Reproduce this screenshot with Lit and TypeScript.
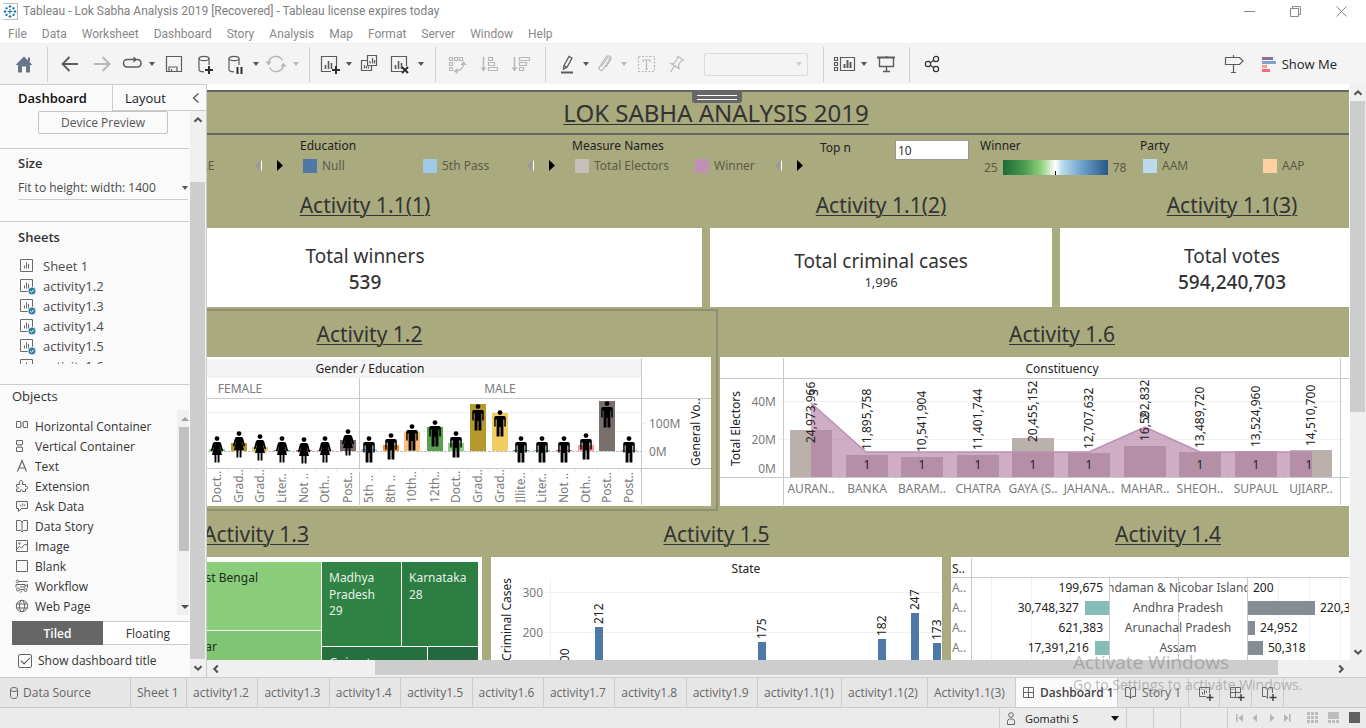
import { LitElement, html, svg, css } from "lit";
import { customElement } from "lit/decorators.js";

const resets = css`
  * { box-sizing: border-box; }
  button, input, select {
    font: inherit;
    color: inherit;
    background: none;
    border: 0;
    border-radius: 0;
    padding: 0;
    margin: 0;
  }
  svg { display: block; flex: none; }
  ul { list-style: none; margin: 0; padding: 0; }
  h1, h2, h3, p { margin: 0; font-weight: 400; }
`;

/* ---------- toolbar icons, all on a 24px box ---------- */
const D = "#5c5c5c";
const L = "#b8b8b8";
const icon = (body: unknown, color = D) => html`<svg width="24" height="24" viewBox="0 0 24 24" fill="none" stroke=${color} stroke-width="1.2" aria-hidden="true">${body}</svg>`;
const plus = (x: number, y: number) => svg`<path d="M${x - 4} ${y}h8M${x} ${y - 4}v8" stroke="#2e2e2e" stroke-width="2"/>`;
const cylinder = svg`<ellipse cx="10" cy="6.5" rx="5" ry="2.2"/><path d="M5 6.5v11c0 1.4 2 2.3 5 2.3M15 6.5V13"/>`;
const bars3 = svg`<path d="M8.5 17v-4M11.5 17V9M14.5 17v-6" stroke-width="1.6"/>`;

const icons = {
  home: icon(svg`<path d="M12 4.5 20.5 13H18v7.5h-4v-6h-4v6H6V13H3.5z" fill="#66758a" stroke="none"/><path d="M16 5.5h2v4h-2z" fill="#66758a" stroke="none"/>`),
  back: icon(svg`<path d="M4.5 12H20M11.5 5 4.5 12l7 7" stroke-width="1.9"/>`),
  forward: icon(svg`<path d="M19.500 12H4M12.500 5l7 7-7 7" stroke-width="1.9"/>`, L),
  replay: icon(svg`<path d="M15 7.500H7a3.500 3.500 0 0 0-3.500 3.500v.5A3.500 3.500 0 0 0 7 15h10.500a3.500 3.500 0 0 0 3.500-3.500c0-2.500-1.500-4-4-4" stroke-width="1.5"/><path d="M13.500 4.500 17.500 7.500l-4 3z" fill="#5c5c5c" stroke="none"/>`),
  save: icon(svg`<path d="M4.500 4.500h15v15h-15z"/><path d="M7 19.500v-4.500h8v4.500M9.500 17v2.500" />`),
  addData: icon(svg`${cylinder}${plus(15, 18)}`),
  pause: icon(svg`${cylinder}<path d="M13.500 15v7M17.500 15v7" stroke="#2e2e2e" stroke-width="2"/>`),
  refresh: icon(svg`<path d="M4.500 10.500a7.500 7.500 0 0 1 14-2M19.500 13.500a7.500 7.500 0 0 1-14 2" stroke-width="1.5"/><path d="M1.500 9.500h6l-3 4zM16.500 14.500h6l-3-4z" fill="#b8b8b8" stroke="none"/>`, L),
  newSheet: icon(svg`<path d="M14 19.500H4.500v-15h15V14"/>${bars3}${plus(19, 18)}`),
  duplicate: icon(svg`<path d="M10.500 3.500h9v10h-9zM10 8.500H4.500v10h10V14"/><path d="M13 11.500V9M15.500 11.500V6M17.500 11.500V8M7.500 16.500V13M9.500 16.500V14M11.500 16.500V14.500"/>`),
  clear: icon(svg`<path d="M15 19.500H4.500v-15h15V14"/>${bars3}<path d="m15 15 6 6M21 15l-6 6" stroke="#2e2e2e" stroke-width="2"/>`),
  swap: icon(svg`<path d="M4.500 5.500h3v3h-3zM9.500 5.500h3v3h-3zM14.500 5.500h3v3h-3zM4.500 10.500h3v3h-3zM4.500 15.500h3v3h-3z"/><path d="M10 19c5 0 8-3 8.500-7" stroke-width="1.400"/><path d="M12.500 16v6L8.500 19zM15.500 13h6l-3-4z" fill="#b8b8b8" stroke="none"/>`, L),
  sortAsc: icon(svg`<path d="M6.500 5v12" stroke-width="1.500"/><path d="M3.500 15.500h6l-3 4z" fill="#b8b8b8" stroke="none"/><path d="M11.500 5.500h4v3h-4zM11.500 10.500h6v3h-6zM11.500 15.500h9v3h-9z"/>`, L),
  sortDesc: icon(svg`<path d="M5.500 5v12" stroke-width="1.500"/><path d="M2.500 15.500h6l-3 4z" fill="#b8b8b8" stroke="none"/><path d="M10.500 5.500h10v3h-10zM10.500 10.500h7v3h-7zM10.500 15.500h4v3h-4z"/>`, L),
  highlight: icon(svg`<path d="M9 13.500 14 4.500l3 1.700L12 15.200l-3.500 1.800zM9 13.500l3 1.700" stroke-width="1.300"/><path d="M6 20.500h12" stroke-width="2"/>`),
  clip: icon(svg`<path d="M8.500 14.500 14 6.500c1-1.500 3.500 0 2.500 1.700L10 17.500c-1.700 2.300-5 0-3.500-2.500L13 5c2-3 6.500 0 4.500 3l-4.500 7" />`, L),
  text: icon(svg`<path d="M4.500 4.500h16v15h-16z" stroke-dasharray="2 1.500"/><path d="M9 10V8h7v2M12.500 8v9M11 17h3"/>`, L),
  pin: icon(svg`<path d="m13 4.500 5.500 3.500-1.500 1-1 0-2.500 4 .5 3.500-8-5 3.500-.5 2.500-4zM9.500 14l-4 6"/>`, L),
  cards: icon(svg`<path d="M1.500 5.500h3v3h-3zM1.500 10.500h3v3h-3zM1.500 15.500h3v3h-3zM7.500 5.500h14v13h-14z"/><path d="M11.500 16v-4M14.500 16V8M17.500 16v-6" stroke-width="2"/>`),
  present: icon(svg`<path d="M3 5.500h18" stroke-width="2"/><path d="M5.500 6v8.500h14V6M12.500 14.500v5M9 19.500h7M12.500 4v1.500" stroke-width="1.400"/>`),
  share: icon(svg`<circle cx="8" cy="12" r="2.600"/><circle cx="16" cy="7" r="2.600"/><circle cx="16" cy="17" r="2.600"/><path d="m10.300 10.700 3.500-2.200m-3.500 4.800 3.500 2.200"/>`, "#333"),
  sign: icon(svg`<path d="M3.500 5.500h14l3.500 3.500-3.500 3.500h-14zM11.500 3v2.500M11.500 12.500v7.500M9 20.500h5" />`),
};

const caret = (color = "#555") => html`<svg width="6" height="4" viewBox="0 0 6 4" aria-hidden="true"><path d="M0 0h6L3 4z" fill=${color} /></svg>`;
const chevron = (rot: number) => html`<svg width="10" height="10" viewBox="0 0 10 10" aria-hidden="true"><path d="M1.500 6.800 5 3.300l3.500 3.500" fill="none" stroke="#505050" stroke-width="2" transform="rotate(${rot} 5 5)" /></svg>`;

@customElement("tb-toolbar")
class TbToolbar extends LitElement {
  static styles = [resets, css`
    :host { display: flex; align-items: center; background: #f4f4f4; border-top: 1px solid #ececec; height: 41px; flex: none; }
    .group { display: grid; grid-auto-flow: column; align-items: center; justify-items: center; height: 35px; border-right: 1px solid #d0d0d0; }
    .g-home { grid-template-columns: 47px; }
    .g-file { grid-template-columns: 32px 32px 28px 12px 32px 32px 28px 12px 28px 12px; padding: 0 7px 0 6px; }
    .g-sheet { grid-template-columns: 28px 12px 28px 32px 12px; padding: 0 8px 0 5px; }
    .g-sort { grid-template-columns: 32px 32px 32px; padding: 0 8px 0 5px; }
    .g-mark { grid-template-columns: 26px 12px 26px 12px 32px 30px 116px; padding: 0 15px 0 8px; }
    .g-view { grid-template-columns: 26px 12px 32px; padding: 0 7px 0 8px; }
    .g-share { grid-template-columns: 32px; padding-left: 6px; border: 0; }
    button { display: grid; place-items: center; height: 28px; }
    .fit { appearance: none; width: 104px; height: 23px; border: 1px solid #d0d0d0; border-radius: 2px; justify-self: end; }
    .fitbox { display: grid; justify-self: end; align-items: center; }
    .fitbox > * { grid-area: 1 / 1; }
    .fitbox svg { justify-self: end; margin-right: 6px; pointer-events: none; }
    .right { margin-left: auto; display: flex; align-items: center; gap: 16px; padding-right: 29px; }
    .show { display: flex; gap: 6px; align-items: center; font-size: 13px; color: #222; }
  `];
  render() {
    const b = (name: string, i: unknown) => html`<button aria-label=${name}>${i}</button>`;
    return html`
      <div class="group g-home">${b("Start page", icons.home)}</div>
      <div class="group g-file">
        ${b("Undo", icons.back)}${b("Redo", icons.forward)}${b("Replay", icons.replay)}${b("Replay options", caret())}
        ${b("Save", icons.save)}${b("New data source", icons.addData)}${b("Pause updates", icons.pause)}${b("Pause options", caret())}
        ${b("Run update", icons.refresh)}${b("Update options", caret(L))}
      </div>
      <div class="group g-sheet">
        ${b("New worksheet", icons.newSheet)}${b("New options", caret())}${b("Duplicate", icons.duplicate)}${b("Clear sheet", icons.clear)}${b("Clear options", caret())}
      </div>
      <div class="group g-sort">${b("Swap", icons.swap)}${b("Sort ascending", icons.sortAsc)}${b("Sort descending", icons.sortDesc)}</div>
      <div class="group g-mark">
        ${b("Highlight", icons.highlight)}${b("Highlight options", caret())}${b("Group", icons.clip)}${b("Group options", caret(L))}
        ${b("Show labels", icons.text)}${b("Fix axes", icons.pin)}
        <div class="fitbox"><select class="fit" aria-label="Fit" disabled></select>${caret("#ccc")}</div>
      </div>
      <div class="group g-view">${b("Cards", icons.cards)}${b("Card options", caret())}${b("Presentation mode", icons.present)}</div>
      <div class="group g-share">${b("Share", icons.share)}</div>
      <div class="right">
        ${b("Data guide", icons.sign)}
        <button class="show">
          <svg width="14" height="15" viewBox="0 0 14 15"><path d="M0 0h11v3H0z" fill="#8b6f98"/><path d="M0 4h14v3H0z" fill="#7fa3cf"/><path d="M0 8h5v3H0z" fill="#f2a47e"/><path d="M0 12h8v3H0z" fill="#f26a80"/></svg>
          <span>Show Me</span>
        </button>
      </div>`;
  }
}

/* ---------- side pane ---------- */
const sheetIcon = (used: boolean) => html`<svg width="16" height="18" viewBox="0 0 16 18" fill="none" stroke="#6a6a6a" aria-hidden="true"><path d="M.5 2.500h12v12H.5z"/><path d="M4.500 11.500v-3M6.500 11.500v-6M8.500 11.500V7"/>${used ? svg`<circle cx="12" cy="14" r="4" fill="#327f9e" stroke="#fafafa" stroke-width=".8"/><path d="m10.200 14 1.300 1.300 2.300-2.500" stroke="#fff"/>` : ""}</svg>`;
const small = (body: unknown) => html`<svg width="14" height="14" viewBox="0 0 14 14" fill="none" stroke="#666" aria-hidden="true">${body}</svg>`;
const objects: [string, unknown][] = [
  ["Horizontal Container", small(svg`<path d="M1.500 2.500h4v6h-4zM8.500 2.500h4v6h-4z"/><path d="M5.500 3h3v5h-3z" fill="#b9b9b9" stroke="none"/>`)],
  ["Vertical Container", small(svg`<path d="M1.500 1.500h6v4h-6zM1.500 8.500h6v4h-6z"/><path d="M2 5.500h5v3H2z" fill="#b9b9b9" stroke="none"/>`)],
  ["Text", small(svg`<path d="M2.500 12.500 7 1.500l4.500 11M4 9h6" stroke-width="1.200"/>`)],
  ["Extension", small(svg`<path d="M1.500 5.500h3.300C3.500 3 4.500 1.500 6 1.500s2.500 1.500 1.200 4h3.300v2c3-.8 3 3.300 0 2.500v2.500H7.500c.5-2.300-2.500-2.300-2 0h-4V10c2.500.5 2.500-2.500 0-2z"/>`)],
  ["Ask Data", small(svg`<path d="M1.500 2.500h11v7h-6l-3 3v-3h-2z"/><path d="M5.500 7.500v-2M7.500 7.500v-3M9.500 7.500V5" stroke="#aaa" stroke-width="1.500"/>`)],
  ["Data Story", small(svg`<path d="M7 3 5.500 1.500h-4v10h4L7 13l1.500-1.500h4v-10h-4zv10"/>`)],
  ["Image", small(svg`<path d="M1.500 1.500h11v11h-11z"/><path d="m1.500 10 3-2.500 2 1.500 3-3.500 3 .5" /><circle cx="4.500" cy="4.500" r=".8"/>`)],
  ["Blank", small(svg`<path d="M1.500 1.500h11v11h-11z"/>`)],
  ["Workflow", small(svg`<circle cx="2.500" cy="2.500" r="1.300"/><path d="M4 2.500h8.500M1 5.500h9v2.500H5M1 5.500v3M10 7l2.500-1.500V9"/><circle cx="3" cy="10.500" r="1.500"/><circle cx="10.500" cy="11" r="1.500"/><path d="M4.500 10.500H9M5 13.500 7 12"/>`)],
  ["Web Page", small(svg`<circle cx="7" cy="7" r="5.700"/><ellipse cx="7" cy="7" rx="2.600" ry="5.700"/><path d="M1.500 5h11M1.500 9h11"/>`)],
];

@customElement("tb-side-pane")
class TbSidePane extends LitElement {
  static styles = [resets, css`
    :host { display: flex; flex-direction: column; width: 207px; flex: none; background: #fafafa; color: #4a4a4a; border-top: 1px solid #ccc; border-right: 1px solid #ccc; font-size: 12px; min-height: 0; }
    .tabs { display: grid; grid-template-columns: 112px 1fr; height: 26px; flex: none; }
    .tab { font-size: 13px; color: #222; text-align: left; }
    .on { font-weight: 600; padding-left: 18px; color: #111; }
    .off { border-left: 1px solid #ccc; border-bottom: 1px solid #ccc; padding: 0 6px 0 12px; display: flex; align-items: center; justify-content: space-between; }
    .body { display: grid; grid-template-columns: 1fr 16px; flex: 1; min-height: 0; overflow: hidden; }
    .bar { background: #f0f0f0; display: flex; flex-direction: column; }
    .bar button { height: 18px; display: grid; place-items: center; flex: none; }
    .thumb { background: #cdcdcd; margin-top: 53px; margin-right: 1px; flex: 1; }
    .content { display: flex; flex-direction: column; padding-right: 1px; }
    .preview { height: 23px; width: 130px; border: 1px solid #c4c4c4; border-radius: 2px; margin: 0 auto 14px 38px; color: #555; flex: none; }
    h2 { font-size: 13px; line-height: 16px; font-weight: 600; color: #333; }
    .size, .sheets { border-top: 1px solid #ccc; padding-left: 18px; flex: none; }
    .size { height: 73px; padding-top: 6px; }
    .field { display: grid; align-items: start; border-bottom: 1px solid #ccc; margin: 7px 1px 0 0; height: 22px; }
    .field > * { grid-area: 1 / 1; }
    .field select { appearance: none; width: 100%; height: 20px; line-height: 20px; }
    .field svg { justify-self: end; margin: 8px 0 0 0; pointer-events: none; }
    .sheets { height: 163px; padding-top: 7px; }
    .sheets ul { height: 108px; overflow: hidden; margin-top: 11px; }
    li { height: 20px; display: flex; align-items: center; }
    .sheets li { gap: 7px; padding-left: 2px; font-size: 13px; }
    .objects { border-top: 1px solid #ccc; padding: 3px 0 0 12px; flex: none; color: #333; }
    .objects h2 { font-weight: 400; }
    .shelf { display: grid; grid-template-columns: 1fr 12px; height: 205px; overflow: hidden; margin-top: 6px; }
    .shelf ul { padding-top: 6px; }
    .shelf li { gap: 6px; padding-left: 3px; }
    .mini { background: #f0f0f0; display: flex; flex-direction: column; align-items: end; }
    .mini .m-thumb { background: #c1c1c1; width: 10px; height: 124px; margin-top: 6px; }
    .mini svg { margin: 7px 0 0 0; }
    .mini .down { margin: auto 0 7px 0; }
    .mode { display: grid; grid-template-columns: 91px 1fr; height: 24px; margin-top: 6px; }
    .tiled { background: #666; color: #fff; font-weight: 600; }
    .floating { border: 1px solid #ccc; border-width: 1px 0; background: #fff; padding-left: 4px; }
    .check { display: flex; align-items: center; gap: 6px; padding: 7px 0 0 6px; }
    .check input { appearance: none; width: 14px; height: 14px; border: 1px solid #666; border-radius: 2px; display: grid; place-items: center; background: #fff; }
    .check input:checked::after { content: ""; width: 4px; height: 8px; border: solid #444; border-width: 0 1px 1px 0; transform: translateY(-1px) rotate(45deg); }
  `];
  render() {
    return html`
      <div class="tabs">
        <button class="tab on">Dashboard</button>
        <button class="tab off">Layout
          <svg width="8" height="12" viewBox="0 0 8 12"><path d="M6.500 1.500 1.500 6l5 4.500" fill="none" stroke="#555" stroke-width="1.300" /></svg>
        </button>
      </div>
      <div class="body">
        <div class="content">
          <button class="preview">Device Preview</button>
          <section class="size">
            <h2>Size</h2>
            <div class="field"><select aria-label="Size"><option>Fit to height: width: 1400</option></select>${caret()}</div>
          </section>
          <section class="sheets">
            <h2>Sheets</h2>
            <ul>${["Sheet 1", "activity1.2", "activity1.3", "activity1.4", "activity1.5", "activity1.6"].map((s, i) => html`<li>${sheetIcon(i > 0)}<span>${s}</span></li>`)}</ul>
          </section>
          <section class="objects">
            <h2>Objects</h2>
            <div class="shelf">
              <ul>${objects.map(([n, i]) => html`<li>${i}<span>${n}</span></li>`)}</ul>
              <div class="mini">
                <svg width="8" height="4" viewBox="0 0 8 4"><path d="M0 4h8L4 0z" fill="#a0a0a0"/></svg>
                <div class="m-thumb"></div>
                <svg class="down" width="8" height="4" viewBox="0 0 8 4"><path d="M0 0h8L4 4z" fill="#505050"/></svg>
              </div>
            </div>
            <div class="mode"><button class="tiled">Tiled</button><button class="floating">Floating</button></div>
            <label class="check"><input type="checkbox" checked /><span>Show dashboard title</span></label>
          </section>
        </div>
        <div class="bar"><button aria-label="Scroll up">${chevron(0)}</button><div class="thumb"></div><button aria-label="Scroll down">${chevron(180)}</button></div>
      </div>`;
  }
}

/* ---------- charts ---------- */
const chartStyles = css`
  :host { display: block; }
  svg { font-size: 12px; }
  .ink { fill: #222; }
  .mute { fill: #7b7b7b; }
  .mid { text-anchor: middle; }
  .end { text-anchor: end; }
  .line { stroke: #c9c9c9; fill: none; }
  .grid { stroke: #f0f0f0; fill: none; }
  .dash { stroke: #bdbdbd; fill: none; stroke-dasharray: 3 1; }
  .crisp { shape-rendering: crispEdges; }
`;
const up = (x: number, y: number, t: string, cls = "ink") => svg`<text class=${cls} transform="translate(${x} ${y}) rotate(-90)">${t}</text>`;

const man = svg`<circle cx="0" cy="2.600" r="2.400"/><path d="M-4 6h8q1.800 0 1.800 2v8.500H4.300V9.500H3.400V26.500H.5V17h-1v9.500h-2.900V9.500h-.9v7h-1.500V8q0-2 1.800-2z"/>`;
const woman = svg`<circle cx="0" cy="2.600" r="2.400"/><path d="M-2.500 6h5q1.200 0 1.700 1.500L6.200 15l-1.500.6L2.700 10 5 19H2.500v7.500H.6V19h-1.200v7.500h-1.900V19H-5l2.300-9-2 5.600L-6.200 15l2-7.500Q-3.700 6-2.500 6z"/>`;
type Mark = [number, string, number, string, number];
const marks: Mark[] = [
  [217, "Doct..", 449, "#8cd17d", 436], [239, "Grad..", 443, "#b6992d", 431], [260, "Grad..", 447, "#f1ce63", 434],
  [282, "Liter..", 450, "#499894", 436], [304, "Not ..", 450, "#e15759", 437], [325, "Oth..", 450, "#ff9d9a", 436], [348, "Post..", 440, "#79706e", 429],
  [369, "5th ..", 449, "#a0cbe8", 436], [391, "8th ..", 445, "#f28e2b", 433], [412, "10th..", 432, "#ffbe7d", 424], [435, "12th..", 427, "#59a14f", 420],
  [456, "Doct..", 443, "#8cd17d", 431], [478, "Grad..", 404, "#b6992d", 404], [500, "Grad..", 413, "#f1ce63", 410], [521, "Illite..", 450, "#499894", 436],
  [542, "Liter..", 450, "#86bcb6", 436], [564, "Not ..", 450, "#e15759", 436], [586, "Oth..", 445, "#ff9d9a", 433], [607, "Post..", 401, "#79706e", 401], [629, "Post..", 450, "#bab0ac", 436],
];

@customElement("tb-votes-by-education")
class TbVotesByEducation extends LitElement {
  static styles = [resets, chartStyles];
  render() {
    return html`<svg width="683" height="149" viewBox="28 357 683 149" role="img" aria-label="General votes by gender and education">
      <g class="crisp">
        <path d="M28 359h613v19H28z" fill="#f4f4f4"/>
        <path class="grid" d="M28 412.500h613M28 431.500h613M641 423.500h5M641 451.500h5"/>
        <path class="dash" d="M28 451.500h613"/>
        <path class="line" d="M28 398.500h683M28 468.500h683M359.500 378v127M641.500 358v147"/>
        ${marks.map((m) => svg`<path d="M${m[0] - 8} ${m[2]}h16V451h-16z" fill=${m[3]}/><path class="grid" d="M${m[0] + 11.5} 469v3"/>`)}
      </g>
      ${marks.map((m) => svg`<g transform="translate(${m[0]} ${m[4]})">${m[0] < 359 ? woman : man}</g>${up(m[0] + 4, 503, m[1], "mute")}`)}
      <text class="ink mid" x="370" y="373">Gender / Education</text>
      <text class="mute mid" x="240" y="393">FEMALE</text>
      <text class="mute mid" x="500" y="393">MALE</text>
      <text class="mute" x="649" y="428">100M</text>
      <text class="mute" x="649" y="456">0M</text>
      ${up(700, 466, "General Vo..")}
    </svg>`;
  }
}

const seats: [string, string, number, number, string][] = [
  ["AURAN..", "24,973,966", 430, 443, ""], ["BANKA", "11,895,758", 455, 450, "1"], ["BARAM..", "10,541,904", 457, 452, "1"],
  ["CHATRA", "11,401,744", 455, 450, "1"], ["GAYA (S..", "20,455,152", 438, 442, "1"], ["JAHANA..", "12,707,632", 453, 449, "1"],
  ["MAHAR..", "16,592,832", 446, 441, ""], ["SHEOH..", "13,489,720", 452, 448, "1"], ["SUPAUL", "13,524,960", 451, 447, "1"], ["UJIARP..", "14,510,700", 450, 446, "1"],
];
const seatX = (i: number) => Math.round(811 + i * 55.6);

@customElement("tb-electors")
class TbElectors extends LitElement {
  static styles = [resets, chartStyles];
  render() {
    return html`<svg width="684" height="149" viewBox="720 357 684 149" role="img" aria-label="Total electors by constituency">
      <g class="crisp">
        <path class="grid" d="M779 401.500h566M779 439.500h566"/>
        ${seats.map((s, i) => svg`<path d="M${seatX(i) - 21} ${s[2]}h42V477h-42z" fill="#bab0ac"/><path class="grid" d="M${seatX(i) + 28.5} 478v3"/>`)}
      </g>
      <path d="M811 403 866 452H1089L1145 427 1200 452H1312V477H811z" fill="#b07aa1" fill-opacity=".62"/>
      <path d="M811 403 866 452H1089L1145 427 1200 452H1312" fill="none" stroke="#bd8fb2" stroke-width="1.500"/>
      <path class="line crisp" d="M720 378.500h684M720 477.500h684M783.500 358v147M1340.500 358v147"/>
      <text class="ink mid" x="1062" y="373">Constituency</text>
      ${up(740, 466, "Total Electors")}
      <text class="mute end" x="776" y="406">40M</text>
      <text class="mute end" x="776" y="444">20M</text>
      <text class="mute end" x="776" y="473">0M</text>
      ${seats.map((s, i) => svg`${up(seatX(i) + 4, s[3], s[1])}<text class="ink mid" x=${i === 9 ? 1309 : seatX(i)} y="469">${s[4]}</text><text class="mute mid" x=${seatX(i)} y="493">${s[0]}</text>`)}
      ${up(818, 396, "3")}${up(1149, 419, "2")}
    </svg>`;
  }
}

@customElement("tb-treemap")
class TbTreemap extends LitElement {
  static styles = [resets, chartStyles, css`.lite { fill: #e6efe8; } .dark { fill: #1e2b1c; }`];
  render() {
    return html`<svg width="452" height="110" viewBox="30 557 452 110" role="img" aria-label="Seats by state">
      <g class="crisp">
        <path d="M34 562h287v68H34z" fill="#8ace7b"/><path d="M34 631h287v36H34z" fill="#80c574"/>
        <path d="M322 562h79v84h-79z" fill="#308344"/><path d="M402 562h76v84h-76z" fill="#2c7d41"/>
        <path d="M322 647h105v20H322z" fill="#266f3e"/><path d="M428 647h50v20h-50z" fill="#23693f"/>
      </g>
      <text class="dark end" x="258" y="582">West Bengal</text>
      <text class="dark end" x="217" y="651">Bihar</text>
      <text class="lite" x="329" y="582">Madhya</text><text class="lite" x="329" y="599">Pradesh</text><text class="lite" x="329" y="615">29</text>
      <text class="lite" x="409" y="582">Karnataka</text><text class="lite" x="409" y="599">28</text>
      <text class="lite" x="329" y="667">Gujarat</text>
    </svg>`;
  }
}

const cases: [number, number, string][] = [[599, 627, "212"], [762, 642, "175"], [882, 639, "182"], [915, 613, "247"], [937, 643, "173"]];
@customElement("tb-criminal-cases")
class TbCriminalCases extends LitElement {
  static styles = [resets, chartStyles];
  render() {
    return html`<svg width="451" height="110" viewBox="491 557 451 110" role="img" aria-label="Criminal cases by state">
      <g class="crisp">
        <path class="grid" d="M545 592.500h397M545 632.500h397M550.500 578v89"/>
        ${cases.map((c) => svg`<path d="M${c[0] - 4} ${c[1]}h8V667h-8z" fill="#4e79a7"/>`)}
      </g>
      <text class="ink mid" x="746" y="573">State</text>
      <text class="mute end" x="543" y="597">300</text><text class="mute end" x="543" y="637">200</text>
      ${up(511, 578, "Criminal Cases", "ink end")}
      ${up(569, 669, "100")}
      ${cases.map((c) => up(c[0] + 4, c[1] - 3, c[2]))}
    </svg>`;
  }
}

const states: [string, string, number, string, number][] = [
  ["Andaman & Nicobar Islands", "199,675", 0, "200", 0], ["Andhra Pradesh", "30,748,327", 24, "220,390", 67],
  ["Arunachal Pradesh", "621,383", 0, "24,952", 7], ["Assam", "17,391,216", 14, "50,318", 15],
];
@customElement("tb-state-votes")
class TbStateVotes extends LitElement {
  static styles = [resets, chartStyles];
  render() {
    return html`<svg width="434" height="110" viewBox="951 557 434 110" role="img" aria-label="Votes by state">
      <defs><clipPath id="names"><path d="M1110 578h137v89h-137z"/></clipPath></defs>
      <g class="crisp">
        <path class="grid" d="M991.500 578v89M1031.500 578v89M1070.500 578v89M1278.500 578v89M1309.500 578v89M1340.500 578v89"/>
        ${states.map((s, i) => svg`<path d="M${1109 - s[2]} ${601 + (i - 1) * 20}h${s[2]}v14h-${s[2]}z" fill="#86bcb6"/><path d="M1248 ${601 + (i - 1) * 20}h${s[4]}v14h-${s[4]}z" fill="#858c94"/>`)}
        <path class="line" d="M951 577.500h434M971.500 558v109M1109.500 578v89M1247.500 578v89"/>
        <path class="dash" d="M1178.500 578v89"/>
      </g>
      <text class="ink" x="952" y="573">S..</text>
      ${states.map((s, i) => {
        const y = 592 + i * 20;
        return svg`<text class="mute" x="952" y=${y}>A..</text>
          <text class="ink end" x=${1103 - s[2]} y=${y}>${s[1]}</text>
          <g clip-path="url(#names)"><text class="mid" fill="#555" x="1178" y=${y}>${s[0]}</text></g>
          <text class="ink" x=${1253 + s[4]} y=${y}>${s[3]}</text>`;
      })}
    </svg>`;
  }
}

/* ---------- dashboard canvas ---------- */
@customElement("tb-canvas")
class TbCanvas extends LitElement {
  static styles = [resets, css`
    :host { display: grid; grid-template: minmax(0, 1fr) 17px / minmax(0, 1fr) 17px; flex: 1; min-width: 0; min-height: 0; background: #fff; }
    .view { overflow: hidden; padding-top: 6px; }
    .board { width: 1400px; margin-left: -191px; background: #a9aa7e; color: #333; font-family: "Noto Sans", "Open Sans", sans-serif; font-size: 12px; min-height: 100%; }
    .title { position: relative; border: solid #666; border-width: 2px 0; height: 45px; display: grid; place-items: center; }
    .title h1 { font-size: 24px; line-height: 40px; text-decoration: underline; text-decoration-thickness: 1px; text-underline-offset: 2px; }
    .grip { position: absolute; top: 0; left: 676px; width: 50px; height: 11px; background: #666; border-radius: 0 0 3px 3px; display: grid; align-content: center; gap: 3px; padding: 0 5px; }
    .grip i { height: 1px; background: #fff; }
    .filters { display: grid; grid-template-columns: 272px 272px 248px 160px 160px 272px; padding-left: 12px; height: 48px; }
    .legend h3, .topn span { color: #222; font-size: 12px; line-height: 16px; }
    .legend { padding-top: 3px; }
    .items { display: flex; align-items: center; padding: 0 17px 0 3px; height: 23px; color: #5b5b49; }
    .item { display: flex; align-items: center; gap: 5px; width: 120px; }
    .item.tight { width: auto; }
    .sw { width: 14px; height: 14px; }
    .arrows { display: flex; align-items: center; gap: 15px; margin-left: auto; }
    .arrows button { height: 12px; }
    .topn { display: grid; grid-template-columns: 75px 74px; align-items: start; padding-top: 5px; }
    .topn input { background: #fff; border: 1px solid #999; height: 20px; padding: 0 2px; width: 74px; color: #333; }
    .ramp { display: flex; align-items: center; gap: 5px; height: 26px; padding-left: 4px; color: #5b5b49; }
    .scale { width: 105px; height: 15px; background: linear-gradient(90deg, #1d6b37, #4a9b4e 20%, #93d37f 37%, #fff 50%, #b9dcee 56%, #6ea2cd 75%, #2a5783); display: grid; justify-items: center; align-items: end; }
    .scale i { width: 1px; height: 4px; background: #000; }
    h2 { font-size: 21px; line-height: 24px; text-align: center; text-decoration: underline; text-decoration-thickness: 1px; text-underline-offset: 2px; padding: 11px 0; }
    .kpis { display: grid; grid-template-columns: 674px 342px 344px; column-gap: 8px; padding-left: 12px; }
    .kpis h2 { padding: 10px 0 11px; }
    .card { background: #fff; height: 79px; display: grid; place-content: center; text-align: center; font-size: 19px; line-height: 26px; padding-top: 2px; }
    .card.big p + p { font-weight: 500; }
    .card .sm { font-size: 13px; line-height: 16px; }
    .charts { display: grid; grid-template-columns: 702px 1fr; gap: 2px; padding-top: 2px; }
    .selected { border: 2px solid #8f8f72; border-left: 0; padding: 0 5px 3px 12px; }
    .plain { padding: 2px 12px 0 0; }
    .bottom { display: grid; grid-template-columns: 452px 451px 434px; gap: 9px; padding-left: 14px; }
    .panel { background: #fff; }
    .vbar { background: #f0f0f0; display: flex; flex-direction: column; margin-left: 1px; }
    .hbar { background: #f0f0f0; display: flex; }
    .corner { background: #f0f0f0; }
    .vbar button { height: 17px; display: grid; place-items: center; }
    .hbar button { width: 17px; display: grid; place-items: center; }
    .thumb { background: #cdcdcd; }
    .vbar .thumb { flex: 311; margin-right: 1px; }
    .vbar .rest { flex: 231; }
    .hbar .before { flex: 151; }
    .hbar .thumb { flex: 903; margin-bottom: 2px; }
    .hbar .rest { flex: 54; }
  `];
  item(color: string, name: string, tight = false) {
    return html`<span class="item ${tight ? "tight" : ""}"><i class="sw" style="background:${color}"></i>${name}</span>`;
  }
  arrows() {
    return html`<span class="arrows">
      <button aria-label="Previous"><svg width="7" height="11" viewBox="0 0 7 11"><path d="M5 0v11L0 5.500z" fill="#9b9b9b"/><path d="M6 .5h1v10H6z" fill="#fff"/></svg></button>
      <button aria-label="Next"><svg width="6" height="11" viewBox="0 0 6 11"><path d="M0 0v11l6-5.500z" fill="#000"/></svg></button>
    </span>`;
  }
  render() {
    return html`
      <div class="view"><div class="board">
        <header class="title"><h1>LOK SABHA ANALYSIS 2019</h1><span class="grip"><i></i><i></i></span></header>
        <section class="filters">
          <div class="legend"><h3>Gender</h3><div class="items">${this.item("#4e79a7", "Null")}${this.item("#e8c8d8", "FEMALE", true)}${this.arrows()}</div></div>
          <div class="legend"><h3>Education</h3><div class="items">${this.item("#4e79a7", "Null")}${this.item("#a0cbe8", "5th Pass", true)}${this.arrows()}</div></div>
          <div class="legend"><h3>Measure Names</h3><div class="items">${this.item("#c8bfbc", "Total Electors")}${this.item("#bf91b2", "Winner", true)}${this.arrows()}</div></div>
          <label class="topn"><span>Top n</span><input value="10" /></label>
          <div class="legend"><h3>Winner</h3><div class="ramp">25<div class="scale"><i></i></div>78</div></div>
          <div class="legend"><h3>Party</h3><div class="items">${this.item("#bddaed", "AAM")}${this.item("#ffd0a0", "AAP", true)}</div></div>
        </section>
        <section class="kpis">
          <div><h2>Activity 1.1(1)</h2><div class="card big"><p>Total winners</p><p>539</p></div></div>
          <div><h2>Activity 1.1(2)</h2><div class="card"><p>Total criminal cases</p><p class="sm">1,996</p></div></div>
          <div><h2>Activity 1.1(3)</h2><div class="card big"><p>Total votes</p><p>594,240,703</p></div></div>
        </section>
        <section class="charts">
          <div class="selected"><h2>Activity 1.2</h2><tb-votes-by-education class="panel"></tb-votes-by-education></div>
          <div class="plain"><h2>Activity 1.6</h2><tb-electors class="panel"></tb-electors></div>
        </section>
        <section class="bottom">
          <div><h2>Activity 1.3</h2><tb-treemap class="panel"></tb-treemap></div>
          <div><h2>Activity 1.5</h2><tb-criminal-cases class="panel"></tb-criminal-cases></div>
          <div><h2>Activity 1.4</h2><tb-state-votes class="panel"></tb-state-votes></div>
        </section>
      </div></div>
      <div class="vbar"><button aria-label="Scroll up">${chevron(0)}</button><div class="thumb"></div><div class="rest"></div><button aria-label="Scroll down">${chevron(180)}</button></div>
      <div class="hbar"><button aria-label="Scroll left">${chevron(-90)}</button><div class="before"></div><div class="thumb"></div><div class="rest"></div><button aria-label="Scroll right">${chevron(90)}</button></div>
      <div class="corner"></div>`;
  }
}

/* ---------- bottom tabs and status ---------- */
const tabIcon = (body: unknown) => html`<svg width="16" height="16" viewBox="0 0 16 16" fill="none" stroke="#666" aria-hidden="true">${body}</svg>`;
const smallPlus = svg`<path d="M8.500 12.500h7M12 9v7" stroke="#444" stroke-width="1.500"/>`;
const boardGlyph = svg`<path d="M1.500 2.500h10v10h-10zM6.500 2.500v10M1.500 7.500h10"/>`;
const storyGlyph = svg`<path d="M6.500 4.500 5 2.500H1.500v9H5l1.500 2 1.500-2h3.500v-9H8zv9"/>`;

@customElement("tb-footer")
class TbFooter extends LitElement {
  static styles = [resets, css`
    :host { display: block; flex: none; font-size: 12px; color: #666; }
    .strip { background: #e6e6e6; border: solid #ccc; border-width: 1px 0; height: 31px; }
    nav { display: grid; width: 94%; height: 29px; grid-template-columns: 131px 56px repeat(8, 1fr) 84px 86px 88px 102px 71px 31px 32px 32px; }
    nav button { border-right: 1px solid #ccc; display: flex; align-items: center; padding-left: 6px; gap: 2px; white-space: nowrap; overflow: hidden; }
    nav .src { padding-left: 9px; gap: 4px; }
    nav .add { padding-left: 9px; }
    nav .on { background: #fafafa; color: #444; font-weight: 600; }
    .status { background: #ebebeb; height: 20px; display: flex; justify-content: flex-end; }
    .cell { border-left: 1px solid #ccc; width: 27px; }
    .user { width: 127px; display: flex; align-items: center; padding: 0 7px 0 6px; gap: 9px; color: #222; border-left: 1px solid #ccc; font-size: 11px; }
    .user svg:last-child { margin-left: auto; }
    .pager { display: flex; align-items: center; gap: 8px; padding-left: 8px; width: 139px; border-left: 1px solid #ccc; margin-left: 20px; }
  `];
  render() {
    const tabs = ["Sheet 1", "activity1.2", "activity1.3", "activity1.4", "activity1.5", "activity1.6", "activity1.7", "activity1.8", "activity1.9", "activity1.1(1)", "activity1.1(2)", "Activity1.1(3)"];
    return html`
      <div class="strip"><nav>
        <button class="src"><svg width="10" height="12" viewBox="0 0 10 12" fill="none" stroke="#666"><ellipse cx="5" cy="2.500" rx="3.500" ry="2"/><path d="M1.500 2.500v7c0 1.200 1.500 2 3.500 2s3.500-.8 3.500-2v-7"/></svg>Data Source</button>
        ${tabs.map((t) => html`<button>${t}</button>`)}
        <button class="on">${tabIcon(boardGlyph)}Dashboard 1</button>
        <button>${tabIcon(storyGlyph)}Story 1</button>
        <button class="add" aria-label="New worksheet">${tabIcon(svg`<path d="M8 11.500H1.500v-9h10V8M4.500 9.500V7M6.500 9.500V5M8.500 8V6"/>${smallPlus}`)}</button>
        <button class="add" aria-label="New dashboard">${tabIcon(svg`<path d="M8 12.500H1.500v-10h10V8M6.500 2.500v10M1.500 7.500h10"/>${smallPlus}`)}</button>
        <button class="add" aria-label="New story">${tabIcon(svg`<path d="M6.500 4.500 5 2.500H1.500v9H5l1.500 2M6.500 4.500 8 2.500h3.500V8M6.500 4.500v9"/>${smallPlus}`)}</button>
      </nav></div>
      <div class="status">
        <button class="user">
          <svg width="10" height="13" viewBox="0 0 10 13" fill="none" stroke="#666"><circle cx="5" cy="3" r="2.300"/><path d="M1.500 12.500v-3q0-2.500 2-2.500h3q2 0 2 2.500v3z"/></svg>
          <span>Gomathi S</span>
          <svg width="8" height="5" viewBox="0 0 8 5"><path d="M0 0h8L4 5z" fill="#111"/></svg>
        </button>
        <span class="cell"></span><span class="cell"></span>
        <span class="cell"></span>
        <div class="pager">
          <svg width="124" height="12" viewBox="0 0 124 12" aria-hidden="true">
            <path d="M0 2h1.500v8H0zM7 2v8L2.500 6zM21 2v8l-4.500-4zM34 2v8l4.500-4zM48 2v8l4.500-4zM53 2h1.500v8H53z" fill="#b5b5b5" />
            <path d="M71 0h3v3h-3zM75 0h3v3h-3zM79 0h3v3h-3zM71 4h3v3h-3zM75 4h3v3h-3zM79 4h3v3h-3zM71 8h3v3h-3zM75 8h3v3h-3zM79 8h3v3h-3zM92 0h11v7H92zM92 8h3v3h-3zM96 8h3v3h-3zM100 8h3v3h-3z" fill="#bdbdbd" />
            <path d="M113 0h11v11h-11z" fill="#606060" />
          </svg>
        </div>
      </div>`;
  }
}

@customElement("app-root")
class AppRoot extends LitElement {
  static styles = [resets, css`
    :host { display: flex; flex-direction: column; height: 100vh; overflow: hidden; position: relative; background: #fff; font-family: "Open Sans", "Noto Sans", sans-serif; }
    .caption { display: flex; align-items: center; height: 22px; flex: none; padding-left: 3px; gap: 5px; font-family: Roboto, "Open Sans", sans-serif; font-size: 12px; color: #808080; }
    .win { margin-left: auto; display: flex; gap: 35px; padding-right: 19px; }
    .win button { height: 15px; }
    .menu { display: flex; height: 21px; flex: none; align-items: center; font-family: Roboto, "Open Sans", sans-serif; font-size: 12px; color: #888; padding: 2px 0 0 8px; gap: 15px; }
    .menu a { color: inherit; text-decoration: none; }
    .main { display: flex; flex: 1; min-height: 0; }
    .mark { position: absolute; right: 57px; bottom: 33px; color: #808080; opacity: .5; pointer-events: none; width: 236px; white-space: nowrap; }
    .mark p:first-child { font-size: 19px; line-height: 26px; }
    .mark p:last-child { font-size: 14px; line-height: 20px; }
  `];
  render() {
    return html`
      <div class="caption">
        <svg width="15" height="17" viewBox="0 0 15 17" stroke="#2b7bb0" stroke-width="1.200" fill="none"><path d="M0 .5h14.500v16H0" stroke="#bbb"/><path d="M7 6v5M4.500 8.500h5M7 2v3M5.500 3.500h3M7 12v3M5.500 13.500h3M2 7v3M.7 8.500h2.600M12 7v3M10.700 8.500h2.600M3.500 4v2.500M2.300 5.300h2.500M10.500 4v2.500M9.300 5.300h2.500M3.500 10.500V13M2.300 11.800h2.500M10.500 10.500V13M9.300 11.800h2.500"/></svg>
        <span>Tableau - Lok Sabha Analysis 2019 [Recovered] - Tableau license expires today</span>
        <div class="win">
          <button aria-label="Minimize"><svg width="11" height="11" viewBox="0 0 11 11" stroke="#888"><path d="M0 5.500h11"/></svg></button>
          <button aria-label="Restore"><svg width="11" height="11" viewBox="0 0 11 11" stroke="#888" fill="none"><path d="M.5 2.500h8v8h-8zM2.500 2.500v-2h8v8h-2"/></svg></button>
          <button aria-label="Close"><svg width="11" height="11" viewBox="0 0 11 11" stroke="#888"><path d="m.5.5 10 10M10.500.5l-10 10"/></svg></button>
        </div>
      </div>
      <nav class="menu">${["File", "Data", "Worksheet", "Dashboard", "Story", "Analysis", "Map", "Format", "Server", "Window", "Help"].map((m) => html`<a href="#">${m}</a>`)}</nav>
      <tb-toolbar></tb-toolbar>
      <div class="main"><tb-side-pane></tb-side-pane><tb-canvas></tb-canvas></div>
      <tb-footer></tb-footer>
      <div class="mark"><p>Activate Windows</p><p>Go to Settings to activate Windows.</p></div>`;
  }
}
